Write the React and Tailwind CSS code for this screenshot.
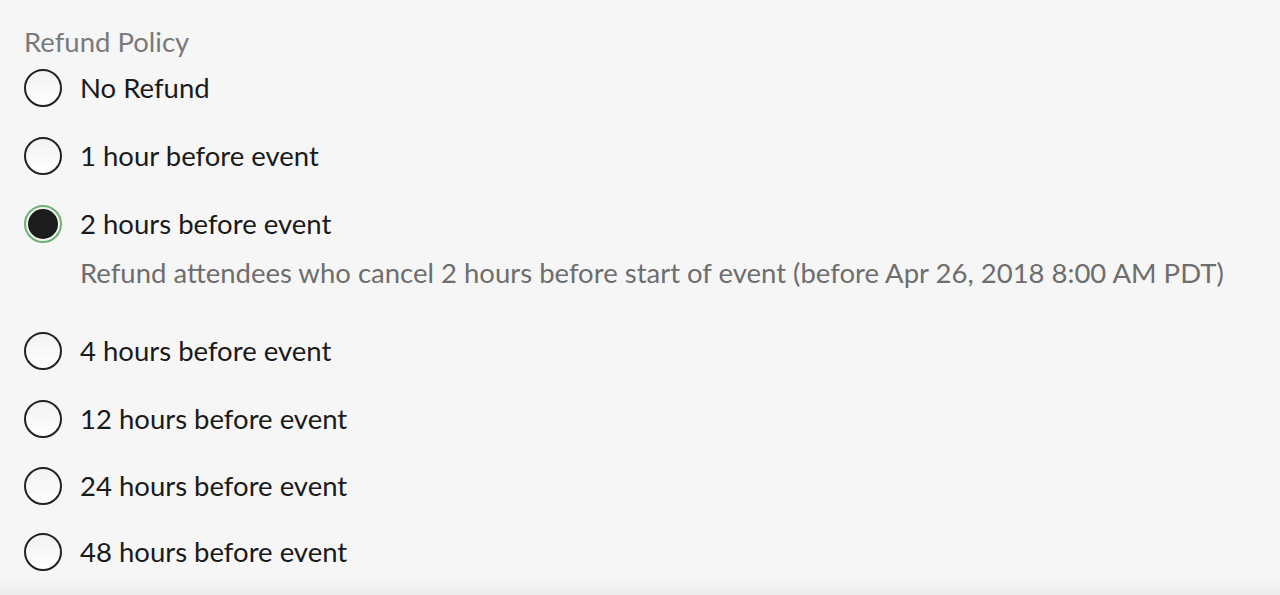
import { useState } from 'react';

const options = [
  { id: 'none', label: 'No Refund' },
  { id: '1h', label: '1 hour before event' },
  { id: '2h', label: '2 hours before event', note: 'Refund attendees who cancel 2 hours before start of event (before Apr 26, 2018 8:00 AM PDT)' },
  { id: '4h', label: '4 hours before event' },
  { id: '12h', label: '12 hours before event' },
  { id: '24h', label: '24 hours before event' },
  { id: '48h', label: '48 hours before event' },
];

function Radio({ checked }) {
  if (checked) {
    return (
      <span className="w-[38px] h-[38px] shrink-0 rounded-full border-2 border-[#72b072] bg-[#eef3ee] p-[2px] flex">
        <span className="flex-1 rounded-full bg-[#1c1c1c]" />
      </span>
    );
  }
  return (
    <span className="w-[38px] h-[38px] shrink-0 rounded-full border-2 border-[#222] bg-gradient-to-b from-[#f2f2f2] to-white" />
  );
}

export default function App() {
  const [value, setValue] = useState('2h');

  return (
    <div
      className="relative w-full h-[595px] overflow-hidden bg-[#f6f6f6] px-6 pt-6"
      style={{ fontFamily: 'Lato, "Noto Sans", sans-serif' }}
    >
      {/* bottom fade */}
      <div className="absolute left-0 right-0 bottom-0 h-[20px] bg-gradient-to-b from-[#f6f6f6] to-[#ededed]" />

      <div className="relative">
        <div className="text-[27.5px] leading-[36px] text-[#7a7a7a]">Refund Policy</div>

        <div className="flex flex-col -mt-[6px]">
          {options.map((opt, i) => (
            <div key={opt.id}>
              <label
                className={`flex items-center gap-[18px] cursor-pointer ${i === 5 ? 'h-[65px]' : 'h-[68px]'}`}
                onClick={() => setValue(opt.id)}
              >
                <Radio checked={value === opt.id} />
                <span className="text-[27.5px] text-[#1a1a1a]">{opt.label}</span>
              </label>
              {opt.note && value === opt.id && (
                <div className="pl-[56px] -mt-[1px] mb-[28px] text-[27.5px] leading-[32px] text-[#6e6e6e]">
                  {opt.note}
                </div>
              )}
            </div>
          ))}
        </div>
      </div>
    </div>
  );
}
